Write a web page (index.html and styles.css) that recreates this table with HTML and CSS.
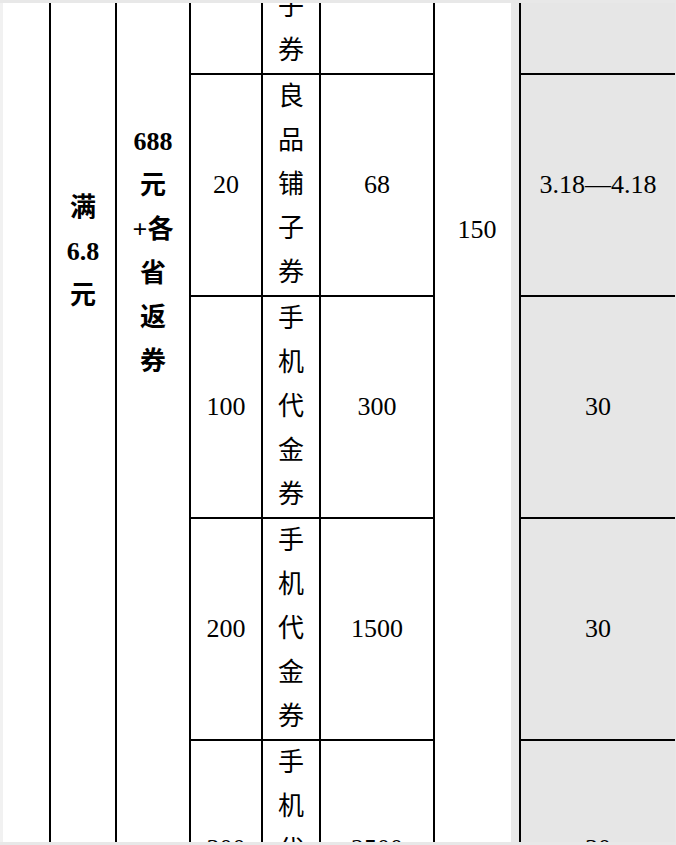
FILE: index.html
```html
<!DOCTYPE html>
<html lang="zh">
<head>
<meta charset="utf-8">
<title>活动表</title>
<link rel="stylesheet" href="styles.css">
</head>
<body>
<div class="sheet">
  <div class="grid">
    <div class="cell blank span-all"></div>
    <div class="cell bold span-all cond">满<br>6.8<br>元</div>
    <div class="cell bold span-all prize">688<br>元<br>+各<br>省<br>返<br>券</div>

    <!-- row 0 (partly above the view) -->
    <div class="cell num r0 c4"></div>
    <div class="cell vert top r0 c5">良<br>品<br>铺<br>子<br>券</div>
    <div class="cell num r0 c6"></div>
    <div class="cell total span-all c7">150</div>
    <div class="cell num gray r0 c8"></div>

    <!-- row 1 -->
    <div class="cell num r1 c4">20</div>
    <div class="cell vert r1 c5">良<br>品<br>铺<br>子<br>券</div>
    <div class="cell num r1 c6">68</div>
    <div class="cell num gray r1 c8">3.18—4.18</div>

    <!-- row 2 -->
    <div class="cell num r2 c4">100</div>
    <div class="cell vert r2 c5">手<br>机<br>代<br>金<br>券</div>
    <div class="cell num r2 c6">300</div>
    <div class="cell num gray r2 c8">30</div>

    <!-- row 3 -->
    <div class="cell num r3 c4">200</div>
    <div class="cell vert r3 c5">手<br>机<br>代<br>金<br>券</div>
    <div class="cell num r3 c6">1500</div>
    <div class="cell num gray r3 c8">30</div>

    <!-- row 4 (partly below the view) -->
    <div class="cell num low r4 c4">300</div>
    <div class="cell vert r4 c5">手<br>机<br>代<br>金<br>券</div>
    <div class="cell num low r4 c6">2500</div>
    <div class="cell num low gray r4 c8">30</div>
  </div>
</div>
</body>
</html>
```

FILE: styles.css
```css
html, body {
  margin: 0;
  padding: 0;
  background: #e8e8e8;
}

.sheet {
  width: 676px;
  height: 845px;
  box-sizing: border-box;
  border-top: 3px solid #e8e8e8;
  border-bottom: 3px solid #e8e8e8;
  background: #e8e8e8;
  overflow: hidden;
}

.grid {
  display: grid;
  width: 675px;
  grid-template-columns: 49px 64px 72px 70px 56px 112px 84px 154px;
  grid-template-rows: 70px 220px 220px 220px 220px;
  gap: 2px;
  background: #000;
}

.cell {
  background: #fff;
  color: #000;
  font-family: "Liberation Serif", "Noto Sans CJK SC", serif;
  font-size: 26px;
  line-height: 44px;
  text-align: center;
  display: flex;
  flex-direction: column;
  justify-content: center;
  align-items: center;
  white-space: nowrap;
}

.span-all {
  grid-row: 1 / -1;
  justify-content: flex-start;
}

.blank {
  grid-column: 1;
  box-shadow: inset 3px 0 0 #f1f1f1;
}

.bold {
  font-weight: bold;
}

.cond {
  grid-column: 2;
  padding-top: 183px;
}

.prize {
  grid-column: 3;
  padding-top: 117px;
}

.total {
  padding-top: 205px;
  box-shadow: inset -8px 0 0 #e9e9e9;
}

.gray {
  background: #e6e6e6;
}

.top {
  justify-content: flex-end;
}

.low {
  padding-bottom: 4px;
}

.r0 { grid-row: 1; }
.r1 { grid-row: 2; }
.r2 { grid-row: 3; }
.r3 { grid-row: 4; }
.r4 { grid-row: 5; }

.c4 { grid-column: 4; }
.c5 { grid-column: 5; }
.c6 { grid-column: 6; }
.c7 { grid-column: 7; }
.c8 { grid-column: 8; }
```
